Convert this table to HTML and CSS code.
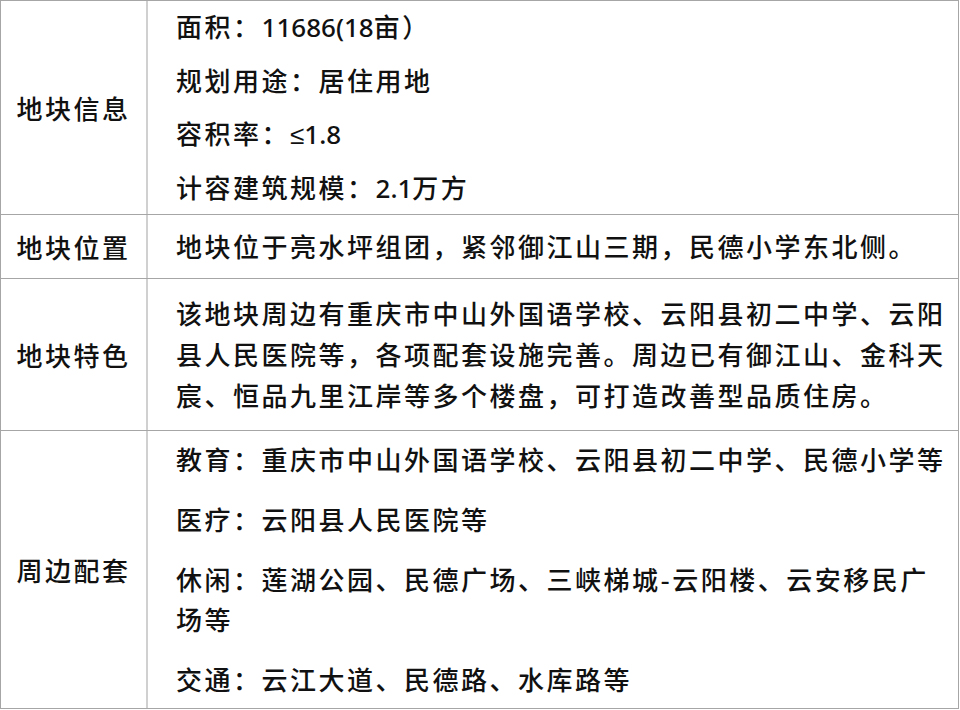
FILE: index.html
```html
<!DOCTYPE html>
<html lang="zh-CN">
<head>
<meta charset="utf-8">
<title>地块信息</title>
<link rel="stylesheet" href="styles.css">
</head>
<body>
<div class="sheet">
  <div class="row row-info">
    <div class="label">地块信息</div>
    <div class="value gap-sm">
      <p>面积：<span class="num">11686(18</span>亩）</p>
      <p>规划用途：居住用地</p>
      <p>容积率：<span class="num">≤1.8</span></p>
      <p>计容建筑规模：<span class="num">2.1</span>万方</p>
    </div>
  </div>
  <div class="row row-pos">
    <div class="label">地块位置</div>
    <div class="value">
      <p>地块位于亮水坪组团，紧邻御江山三期，民德小学东北侧。</p>
    </div>
  </div>
  <div class="row row-feat">
    <div class="label">地块特色</div>
    <div class="value">
      <p>该地块周边有重庆市中山外国语学校、云阳县初二中学、云阳县人民医院等，各项配套设施完善。周边已有御江山、金科天宸、恒品九里江岸等多个楼盘，可打造改善型品质住房。</p>
    </div>
  </div>
  <div class="row row-around">
    <div class="label">周边配套</div>
    <div class="value gap-lg">
      <p>教育：重庆市中山外国语学校、云阳县初二中学、民德小学等</p>
      <p>医疗：云阳县人民医院等</p>
      <p>休闲：莲湖公园、民德广场、三峡梯城-云阳楼、云安移民广场等</p>
      <p>交通：云江大道、民德路、水库路等</p>
    </div>
  </div>
</div>
</body>
</html>
```
FILE: styles.css
```css
html, body {
  margin: 0;
  padding: 0;
  background: #ffffff;
}

body {
  font-family: "Noto Sans CJK SC", "Noto Sans", sans-serif;
  font-size: 26px;
  font-weight: 500;
  letter-spacing: 2.5px;
  color: #111111;
}

.sheet {
  box-sizing: border-box;
  width: 959px;
  border: 1px solid #a6a6a6;
}

.row {
  display: grid;
  grid-template-columns: 147px 1fr;
  border-bottom: 1px solid #a6a6a6;
}

.row:last-child {
  border-bottom: none;
}

.row-info { min-height: 213px; }
.row-pos { min-height: 63px; }
.row-feat { min-height: 151px; }
.row-around { min-height: 277px; }

.label {
  display: flex;
  align-items: center;
  justify-content: center;
  border-right: 2px solid #d0d0d0;
  line-height: 40px;
}

.value {
  display: flex;
  flex-direction: column;
  justify-content: center;
  padding: 0 6px 2px 28px;
  line-height: 40px;
}

.value p {
  margin: 0;
}

.num {
  font-family: "Noto Sans", "Liberation Sans", "DejaVu Sans", sans-serif;
  letter-spacing: 0;
}

.gap-sm {
  gap: 13px;
}

.gap-lg {
  gap: 20px;
}

.row-feat .value {
  line-height: 41px;
}
```
